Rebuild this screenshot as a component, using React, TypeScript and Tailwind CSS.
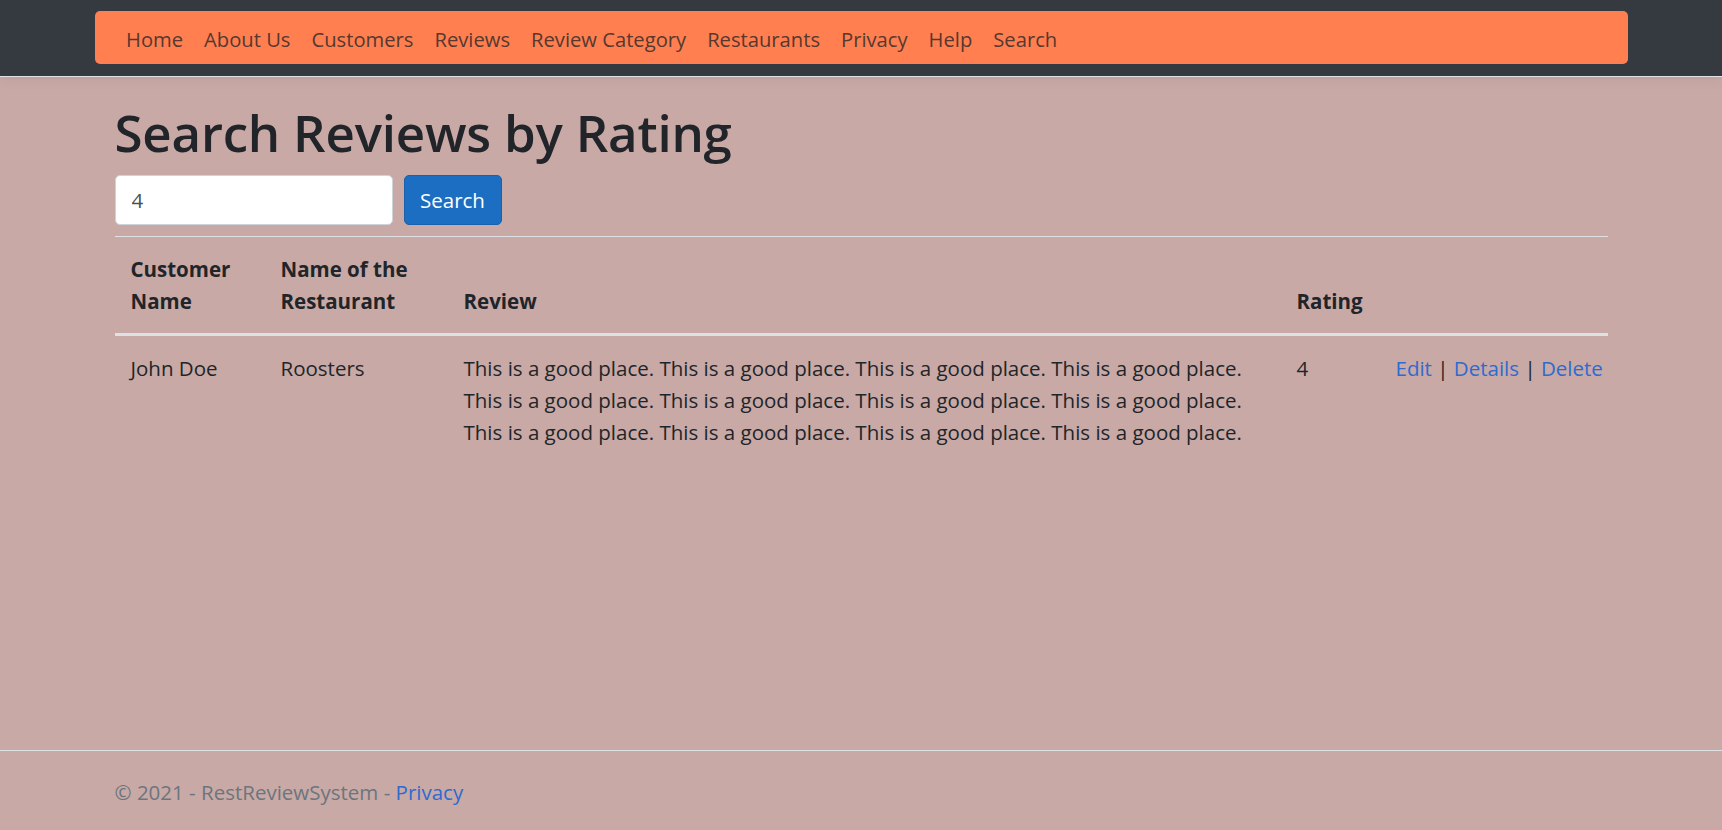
import React, { useState } from 'react';

const navItems = ['Home', 'About Us', 'Customers', 'Reviews', 'Review Category', 'Restaurants', 'Privacy', 'Help', 'Search'];

const reviewText =
  'This is a good place. This is a good place. This is a good place. This is a good place. This is a good place. This is a good place. This is a good place. This is a good place. This is a good place. This is a good place. This is a good place. This is a good place.';

const rows = [{ customer: 'John Doe', restaurant: 'Roosters', review: reviewText, rating: 4 }];

const App: React.FC = () => {
  const [rating, setRating] = useState('4');

  return (
    <div className="min-h-screen flex flex-col bg-[#c8a9a6] font-['Open_Sans','Noto_Sans',sans-serif] text-[20.5px] leading-[32px] text-[#212529]">
      <header className="bg-[#343a40] border-b border-[#dee2e6] h-[77px] pt-[11px] shadow-[0_4px_12px_rgba(0,0,0,0.05)]">
        <nav className="mx-auto w-[1533px] h-[53px] bg-[#ff7f50] rounded-[5px] px-[21px] pt-[3px] flex items-center">
          <ul className="flex text-[20.2px]">
            {navItems.map((item) => (
              <li key={item}>
                <a href="#" className="block px-[10.5px] text-[#55392f]">
                  {item}
                </a>
              </li>
            ))}
          </ul>
        </nav>
      </header>

      <main className="flex-1 mx-auto w-[1533px] px-[20px] pt-[23px]">
        <h1 className="text-[51px] leading-[64px] font-semibold tracking-[-0.2px] mb-[11px]">Search Reviews by Rating</h1>
        <form className="flex gap-[11px]" onSubmit={(e) => e.preventDefault()}>
          <input
            value={rating}
            onChange={(e) => setRating(e.target.value)}
            className="w-[278px] h-[50px] bg-white border border-[#ced4da] rounded-[5px] px-[16px] text-[#495057] outline-none"
          />
          <button type="submit" className="w-[98px] h-[50px] bg-[#1b6ec2] border border-[#1861ac] rounded-[5px] text-white">
            Search
          </button>
        </form>

        <table className="mt-[11px] w-full border-separate border-spacing-0 table-fixed">
          <colgroup>
            <col className="w-[150px]" />
            <col className="w-[183px]" />
            <col className="w-[833px]" />
            <col className="w-[99px]" />
            <col />
          </colgroup>
          <thead>
            <tr>
              {['Customer Name', 'Name of the Restaurant', 'Review', 'Rating', ''].map((h, i) => (
                <th
                  key={i}
                  className="p-[16px] text-left align-bottom font-bold border-t border-b-2 border-[#dee2e6]"
                >
                  {h}
                </th>
              ))}
            </tr>
          </thead>
          <tbody>
            {rows.map((r) => (
              <tr key={r.customer}>
                <td className="p-[16px] align-top border-t border-[#dee2e6]">{r.customer}</td>
                <td className="p-[16px] align-top border-t border-[#dee2e6]">{r.restaurant}</td>
                <td className="p-[16px] align-top border-t border-[#dee2e6]">{r.review}</td>
                <td className="p-[16px] align-top border-t border-[#dee2e6]">{r.rating}</td>
                <td className="p-[16px] align-top border-t border-[#dee2e6] whitespace-nowrap">
                  <a href="#" className="text-[#2d6bd0]">Edit</a> |{' '}
                  <a href="#" className="text-[#2d6bd0]">Details</a> |{' '}
                  <a href="#" className="text-[#2d6bd0]">Delete</a>
                </td>
              </tr>
            ))}
          </tbody>
        </table>
      </main>

      <footer className="h-[80px] border-t border-[#dee2e6] text-[#6c757d] leading-[82px] whitespace-nowrap">
        <div className="mx-auto w-[1533px] px-[20px]">
          © 2021 - RestReviewSystem - <a href="#" className="text-[#2d6bd0]">Privacy</a>
        </div>
      </footer>
    </div>
  );
};

export default App;
